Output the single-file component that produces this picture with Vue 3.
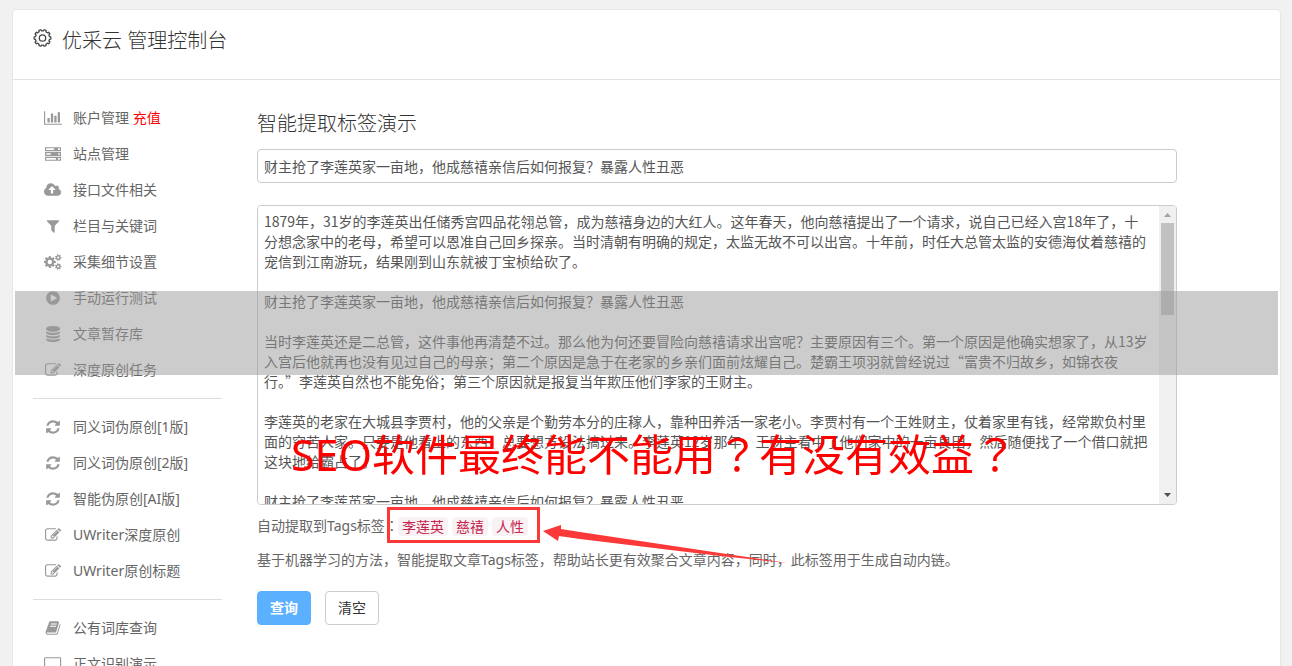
<script setup>
import { computed, ref } from 'vue'

const pencil = 'M888 1184l116-116-152-152-116 116v56h96v96h56zm440-720q-16-16-33 1l-350 350q-17 17-1 33t33-1l350-350q17-17 1-33zm80 594v190q0 119-84.5 203.5t-203.5 84.5h-832q-119 0-203.5-84.5t-84.5-203.5v-832q0-119 84.5-203.5t203.5-84.5h832q63 0 117 25 15 7 18 23 3 17-9 29l-49 49q-14 14-32 8-23-6-45-6h-832q-66 0-113 47t-47 113v832q0 66 47 113t113 47h832q66 0 113-47t47-113v-126q0-13 9-22l64-64q15-15 35-7t20 29zm-96-738l288 288-672 672h-288v-288zm444 132l-92 92-288-288 92-92q28-28 68-28t68 28l152 152q28 28 28 68t-28 68z'
const refresh = 'M1639 1056q0 5-1 7-64 268-268 434.5t-478 166.5q-146 0-282.5-55t-243.5-157l-129 129q-19 19-45 19t-45-19-19-45v-448q0-26 19-45t45-19h448q26 0 45 19t19 45-19 45l-137 137q71 66 161 102t187 36q134 0 250-65t186-179q11-17 53-117 8-23 30-23h192q13 0 22.5 9.5t9.5 22.5zm25-800v448q0 26-19 45t-45 19h-448q-26 0-45-19t-19-45 19-45l138-138q-148-137-349-137-134 0-250 65t-186 179q-11 17-53 117-8 23-30 23h-199q-13 0-22.5-9.5t-9.5-22.5v-7q65-268 270-434.5t480-166.5q146 0 284 55.5t245 156.5l130-129q19-19 45-19t45 19 19 45z'
const chart = 'M640 896v512h-256v-512h256zm384-512v1024h-256v-1024h256zm1024 1152v128h-2048v-1536h128v1408h1920zm-640-896v768h-256v-768h256zm384-384v1152h-256v-1152h256z'
const server = 'M0 128h1792v448h-1792zM128 256v192h896v-192zM1472 256v192h192v-192zM0 672h1792v448h-1792zM128 800v192h512v-192zM1472 800v192h192v-192zM0 1216h1792v448h-1792zM128 1344v192h1088v-192zM1472 1344v192h192v-192z'
const cloud = 'M1280 864q0-14-9-23l-352-352q-9-9-23-9t-23 9l-351 351q-10 12-10 24 0 14 9 23t23 9h224v352q0 13 9.5 22.5t22.5 9.5h192q13 0 22.5-9.5t9.5-22.5v-352h224q13 0 22.5-9.5t9.5-22.5zm640 288q0 159-112.5 271.5t-271.5 112.5h-1088q-185 0-316.5-131.5t-131.5-316.5q0-130 70-240t188-165q-2-30-2-43 0-212 150-362t362-150q156 0 285.5 87t188.5 231q71-62 166-62 106 0 181 75t75 181q0 76-41 138 130 31 213.5 135.5t83.5 238.5z'
const filter = 'M1595 295q17 41-14 70l-493 493v742q0 42-39 59-13 5-25 5-27 0-45-19l-256-256q-19-19-19-45v-486l-493-493q-31-29-14-70 17-39 59-39h1280q42 0 59 39z'
const play = 'M896 128q209 0 385.5 103t279.5 279.5 103 385.5-103 385.5-279.5 279.5-385.5 103-385.5-103-279.5-279.5-103-385.5 103-385.5 279.5-279.5 385.5-103zm384 823q32-18 32-55t-32-55l-544-320q-31-19-64-1-32 19-32 56v640q0 37 32 56 16 8 32 8 17 0 32-9z'
const database = 'M896 768q237 0 443-43t325-127v170q0 69-103 128t-280 93.5-385 34.5-385-34.5-280-93.5-103-128v-170q119 84 325 127t443 43zm0 768q237 0 443-43t325-127v170q0 69-103 128t-280 93.5-385 34.5-385-34.5-280-93.5-103-128v-170q119 84 325 127t443 43zm0-384q237 0 443-43t325-127v170q0 69-103 128t-280 93.5-385 34.5-385-34.5-280-93.5-103-128v-170q119 84 325 127t443 43zm0-1152q208 0 385 34.5t280 93.5 103 128v128q0 69-103 128t-280 93.5-385 34.5-385-34.5-280-93.5-103-128v-128q0-69 103-128t280-93.5 385-34.5z'
const book = 'M1703 478q40 57 18 129l-275 906q-19 64-76.5 107.5t-122.5 43.5h-923q-77 0-148.5-53.5t-99.5-131.5q-24-67-2-127 0-4 3-27t4-37q1-8-3-21.5t-3-19.5q2-11 8-21t16.5-23.5 16.5-23.5q23-38 45-91.5t30-91.5q3-10 .5-30t-.5-28q3-11 17-28t17-23q21-36 42-92t25-90q1-9-2.5-32t.5-28q4-13 22-30.5t22-22.5q19-26 42.5-84.5t27.5-96.5q1-8-3-25.5t-2-26.5q2-8 9-18t18-23 17-21q8-12 16.5-30.5t15-35 16-36 19.5-32 26.5-23.5 36-11.5 47.5 5.5l-1 3q38-9 51-9h761q74 0 114 56t18 130l-274 906q-36 119-71.5 153.5t-128.5 34.5h-869q-27 0-38 15-11 16-1 43 24 70 144 70h923q29 0 56-15.5t35-41.5l300-987q7-22 5-57 38 15 59 43zm-1064 2q-4 13 2 22.5t20 9.5h608q13 0 25.5-9.5t16.5-22.5l21-64q4-13-2-22.5t-20-9.5h-608q-13 0-25.5 9.5t-16.5 22.5zm-83 256q-4 13 2 22.5t20 9.5h608q13 0 25.5-9.5t16.5-22.5l21-64q4-13-2-22.5t-20-9.5h-608q-13 0-25.5 9.5t-16.5 22.5z'
const laptop = 'M160 128h1600q66 0 113 47t47 113v1088q0 66-47 113t-113 47h-1600q-66 0-113-47t-47-113v-1088q0-66 47-113t113-47zM160 256q-32 0-32 32v1088q0 32 32 32h1600q32 0 32-32v-1088q0-32-32-32z'

function gear(cx, cy, ro, ri, hole, teeth) {
  const step = (Math.PI * 2) / teeth
  const at = (r, a) => `${(cx + r * Math.cos(a)).toFixed(0)} ${(cy + r * Math.sin(a)).toFixed(0)}`
  const pts = []
  for (let i = 0; i < teeth; i++) {
    const a = i * step
    pts.push(at(ri, a - step * 0.3), at(ro, a - step * 0.2), at(ro, a + step * 0.2), at(ri, a + step * 0.3))
  }
  return `M${pts.join('L')}zM${cx - hole} ${cy}a${hole} ${hole} 0 1 0 ${hole * 2} 0a${hole} ${hole} 0 1 0 ${-hole * 2} 0z`
}
const cogs = gear(650, 896, 680, 520, 250, 8) + gear(1590, 400, 370, 270, 120, 7) + gear(1590, 1400, 370, 270, 120, 7)
const headGear = gear(950, 1000, 840, 710, 320, 10)

const groups = [
  [
    { text: '账户管理', extra: '充值', d: chart, w: 2048 },
    { text: '站点管理', d: server, w: 1792 },
    { text: '接口文件相关', d: cloud, w: 1920 },
    { text: '栏目与关键词', d: filter, w: 1792 },
    { text: '采集细节设置', d: cogs, w: 1960 },
    { text: '手动运行测试', d: play, w: 1792 },
    { text: '文章暂存库', d: database, w: 1792 },
    { text: '深度原创任务', d: pencil, w: 1792 }
  ],
  [
    { text: '同义词伪原创[1版]', d: refresh, w: 1792 },
    { text: '同义词伪原创[2版]', d: refresh, w: 1792 },
    { text: '智能伪原创[AI版]', d: refresh, w: 1792 },
    { text: 'UWriter深度原创', d: pencil, w: 1792 },
    { text: 'UWriter原创标题', d: pencil, w: 1792 }
  ],
  [
    { text: '公有词库查询', d: book, w: 1792 },
    { text: '正文识别演示', d: laptop, w: 1920 }
  ]
]

const headline = '财主抢了李莲英家一亩地，他成慈禧亲信后如何报复？暴露人性丑恶'
const title = ref(headline)
const article = ref(
  [
    '1879年，31岁的李莲英出任储秀宫四品花翎总管，成为慈禧身边的大红人。这年春天，他向慈禧提出了一个请求，说自己已经入宫18年了，十分想念家中的老母，希望可以恩准自己回乡探亲。当时清朝有明确的规定，太监无故不可以出宫。十年前，时任大总管太监的安德海仗着慈禧的宠信到江南游玩，结果刚到山东就被丁宝桢给砍了。',
    headline,
    '当时李莲英还是二总管，这件事他再清楚不过。那么他为何还要冒险向慈禧请求出宫呢？主要原因有三个。第一个原因是他确实想家了，从13岁入宫后他就再也没有见过自己的母亲；第二个原因是急于在老家的乡亲们面前炫耀自己。楚霸王项羽就曾经说过“富贵不归故乡，如锦衣夜行。”李莲英自然也不能免俗；第三个原因就是报复当年欺压他们李家的王财主。',
    '李莲英的老家在大城县李贾村，他的父亲是个勤劳本分的庄稼人，靠种田养活一家老小。李贾村有一个王姓财主，仗着家里有钱，经常欺负村里面的穷苦人家。只要是他看上的东西，总要想方设法搞过来。李莲英12岁那年，王财主看中了他们家中的一亩良田，然后随便找了一个借口就把这块地给霸占了。',
    headline
  ].join('\n\n') + '\n'.repeat(26)
)
const tags = ['李莲英', '慈禧', '人性']

const scrolled = ref(0)
const thumbSize = 35
const thumbStyle = computed(() => ({
  height: `${thumbSize}%`,
  top: `${scrolled.value * (100 - thumbSize)}%`
}))
function onScroll(e) {
  const el = e.target
  scrolled.value = el.scrollTop / Math.max(1, el.scrollHeight - el.clientHeight)
}

function clearForm() {
  title.value = ''
  article.value = ''
}
</script>

<template>
  <div class="page">
    <div class="card">
      <header class="head">
        <svg class="gear" viewBox="0 0 2000 2000" aria-hidden="true"><path :d="headGear" /></svg>
        <h1>优采云 管理控制台</h1>
      </header>

      <div class="body">
        <nav class="side">
          <ul v-for="(group, g) in groups" :key="g">
            <li v-for="item in group" :key="item.text">
              <a href="#">
                <span class="icon">
                  <svg :viewBox="`0 0 ${item.w} 1792`" aria-hidden="true"><path fill-rule="evenodd" :d="item.d" /></svg>
                </span>
                <span>{{ item.text }} <em v-if="item.extra">{{ item.extra }}</em></span>
              </a>
            </li>
          </ul>
        </nav>

        <main class="main">
          <h2>智能提取标签演示</h2>
          <input v-model="title" class="field" type="text" aria-label="标题" />
          <div class="editor">
            <textarea v-model="article" class="field" aria-label="正文" spellcheck="false" @scroll="onScroll"></textarea>
            <div class="scrollbar" aria-hidden="true">
              <svg viewBox="0 0 17 17"><path d="M5 11h7l-3.500-4z" fill="#a3a3a3" /></svg>
              <div class="track"><div class="thumb" :style="thumbStyle"></div></div>
              <svg viewBox="0 0 17 17"><path d="M5 6h7l-3.500 4z" fill="#505050" /></svg>
            </div>
            <div class="caption">SEO软件最终能不能用<span class="mid">？</span>有没有效益<span class="mid">？</span></div>
          </div>
          <div class="result">
            <span>自动提取到Tags标签<span class="mid">：</span></span>
            <div class="tags">
              <code v-for="tag in tags" :key="tag">{{ tag }}</code>
              <svg class="arrow" viewBox="0 0 246 42" aria-hidden="true">
                <path d="M0 9L18 3L18 7L37 10L177 31L244 41L177 34L37 17L16 14L15 19z" />
              </svg>
            </div>
          </div>
          <p>基于机器学习的方法，智能提取文章Tags标签，帮助站长更有效聚合文章内容，同时，此标签用于生成自动内链。</p>
          <div class="actions">
            <button type="button" class="primary">查询</button>
            <button type="button" @click="clearForm">清空</button>
          </div>
        </main>
      </div>
      <div class="band"></div>
    </div>
  </div>
</template>

<style>
body {
  margin: 0;
  background: #f1f1f1;
}
</style>

<style scoped>
* {
  box-sizing: border-box;
}
.page {
  height: 100vh;
  overflow: hidden;
  padding: 9px 11px 0 12px;
  background: #f1f1f1;
  color: #666;
  font: 14px/20px "Noto Sans", "Noto Sans CJK SC", sans-serif;
}
.card {
  position: relative;
  min-height: 100%;
  background: #fff;
  border: 1px solid #e6e6e6;
  border-radius: 4px;
}
.head {
  display: flex;
  align-items: flex-start;
  gap: 9px;
  height: 70px;
  padding: 16px 20px 0;
  border-bottom: 1px solid #e3e3e3;
}
.gear {
  width: 20px;
  height: 20px;
  margin-top: 2px;
  fill: none;
  stroke: #444;
  stroke-width: 130;
  stroke-linejoin: round;
}
h1,
h2 {
  margin: 0;
  color: #333;
  font-size: 20px;
  line-height: 30px;
  font-weight: 300;
}
.body {
  display: flex;
  gap: 35px;
  padding: 20px 103px 0 20px;
}
.side {
  flex: 0 0 189px;
}
ul {
  list-style: none;
  margin: 0;
  padding: 0 0 10px;
}
ul + ul {
  border-top: 1px solid #ddd;
  padding-top: 10px;
}
.side a {
  display: flex;
  align-items: center;
  gap: 10px;
  height: 36px;
  padding-left: 10px;
  color: #666;
  text-decoration: none;
}
.icon {
  display: flex;
  justify-content: center;
  width: 20px;
}
.icon svg {
  height: 16px;
  fill: #999;
}
em {
  color: #f00;
  font-style: normal;
}
.mid {
  font-family: "Noto Sans CJK JP", sans-serif;
}
.main {
  flex: 1;
  min-width: 0;
  padding-top: 9px;
}
.field {
  display: block;
  width: 100%;
  border: 1px solid #ccc;
  border-radius: 4px;
  padding: 5px 6px;
  background: #fff;
  color: #555;
  font: 14px/20px "Noto Sans CJK SC", "Noto Sans", sans-serif;
  outline: none;
}
input.field {
  height: 34px;
  margin-top: 10px;
}
.editor {
  position: relative;
  margin-top: 22px;
}
textarea.field {
  height: 300px;
  padding-right: 26px;
  resize: none;
  overflow-y: auto;
  scrollbar-width: none;
}
.scrollbar {
  position: absolute;
  top: 1px;
  right: 1px;
  bottom: 1px;
  display: flex;
  flex-direction: column;
  width: 17px;
  border-radius: 0 3px 3px 0;
  background: #f0f0f0;
  pointer-events: none;
}
.scrollbar svg {
  width: 17px;
  height: 17px;
}
.track {
  position: relative;
  flex: 1;
}
.thumb {
  position: absolute;
  left: 2px;
  right: 2px;
  background: #c1c1c1;
}
.caption {
  position: absolute;
  left: 34px;
  top: 217px;
  color: #f00;
  font-size: 43px;
  line-height: 60px;
  white-space: nowrap;
  pointer-events: none;
}
.result {
  display: flex;
  align-items: center;
  height: 38px;
  margin-top: 1px;
}
.result > span {
  width: 130px;
  white-space: nowrap;
}
.tags {
  position: relative;
  display: flex;
  gap: 4px;
  height: 36px;
  padding: 7px 9px 0 8px;
  border: 3px solid #fc3838;
}
code {
  height: 19px;
  padding: 0 4px;
  border-radius: 4px;
  background: #f9f2f4;
  color: #c7254e;
  font: 14px/18px "Noto Sans CJK SC", sans-serif;
}
.arrow {
  position: absolute;
  left: 153px;
  top: 12px;
  width: 246px;
  height: 42px;
  fill: #fc3838;
  pointer-events: none;
}
p {
  margin: 6px 0 0;
}
.actions {
  display: flex;
  gap: 14px;
  margin-top: 21px;
}
button {
  width: 54px;
  height: 34px;
  padding: 0;
  border: 1px solid #ccc;
  border-radius: 4px;
  background: #fff;
  color: #333;
  font: inherit;
}
button.primary {
  border-color: #5bb0ff;
  background: #5bb0ff;
  color: #fff;
  font-weight: 700;
}
.band {
  position: absolute;
  top: 281px;
  left: 2px;
  right: 2px;
  height: 84px;
  background: rgba(153, 153, 153, 0.5);
  pointer-events: none;
}
</style>
